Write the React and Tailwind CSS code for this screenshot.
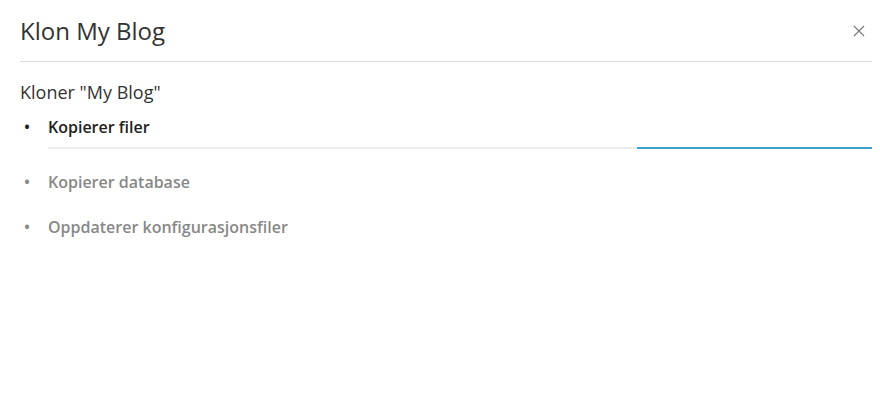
export default function App() {
  const steps = [
    { label: 'Kopierer filer', active: true },
    { label: 'Kopierer database', active: false },
    { label: 'Oppdaterer konfigurasjonsfiler', active: false },
  ];

  return (
    <div className="h-[416px] w-[880px] bg-white font-['Open_Sans',sans-serif] text-[#333]">
      <div className="pl-5 pr-2">
        <div className="flex h-[62px] items-center justify-between border-b border-[#dcdcdc]">
          <h1 className="text-[24px] leading-none text-[#333]">Klon My Blog</h1>
          <button type="button" className="mr-[7px] text-[#777]">
            <svg width="12" height="12" viewBox="0 0 12 12" fill="none" stroke="currentColor" strokeWidth="1.1">
              <path d="M1 1L11 11M11 1L1 11" />
            </svg>
          </button>
        </div>

        <p className="mt-[18px] text-[18px] leading-6 text-[#333]">Kloner "My Blog"</p>

        <ul className="mt-[11px]">
          {steps.map((step) => (
            <li key={step.label} className="mb-[21px]">
              <div
                className={`flex items-center text-[16px] font-semibold leading-6 ${
                  step.active ? 'text-[#222]' : 'text-[#888]'
                }`}
              >
                <span className="w-7 pl-[4px] text-[16px]">•</span>
                <span>{step.label}</span>
              </div>
              {step.active && (
                <div className="ml-7 mt-[8px] mb-[14px] flex h-[2px] bg-[#ececec]">
                  <div className="ml-auto h-[2px] w-[235px] bg-[#3c9fcc]" />
                </div>
              )}
            </li>
          ))}
        </ul>
      </div>
    </div>
  );
}
